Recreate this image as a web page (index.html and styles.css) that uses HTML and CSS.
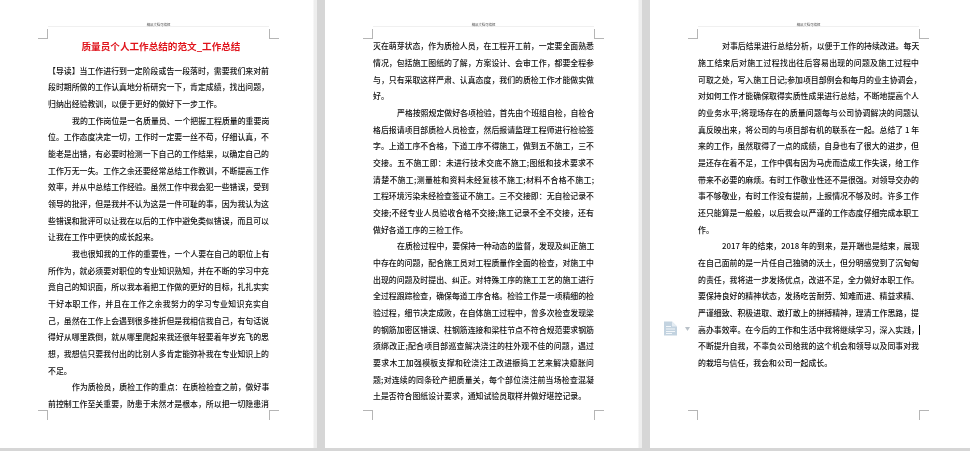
FILE: index.html
```html
<!DOCTYPE html>
<html lang="zh-CN">
<head>
<meta charset="utf-8">
<title>质量员个人工作总结的范文</title>
<link rel="stylesheet" href="styles.css">
</head>
<body>
<main class="desk">
  <section class="page page-a">
    <div class="running-head"><span>精品文档可编辑</span></div>
    <i class="mark tl"></i><i class="mark tr"></i><i class="mark bl"></i><i class="mark br"></i>
    <h1 class="title">质量员个人工作总结的范文_工作总结</h1>
    <p class="para flush">
      <span class="line">【导读】当工作进行到一定阶段或告一段落时，需要我们来对前</span>
      <span class="line">段时期所做的工作认真地分析研究一下，肯定成绩，找出问题，</span>
      <span class="line end">归纳出经验教训，以便于更好的做好下一步工作。</span>
    </p>
    <p class="para">
      <span class="line">我的工作岗位是一名质量员、一个把握工程质量的重要岗</span>
      <span class="line">位。工作态度决定一切，工作时一定要一丝不苟，仔细认真，不</span>
      <span class="line">能老是出错，有必要时检测一下自己的工作结果，以确定自己的</span>
      <span class="line">工作万无一失。工作之余还要经常总结工作教训，不断提高工作</span>
      <span class="line">效率，并从中总结工作经验。虽然工作中我会犯一些错误，受到</span>
      <span class="line">领导的批评，但是我并不认为这是一件可耻的事，因为我认为这</span>
      <span class="line">些错误和批评可以让我在以后的工作中避免类似错误，而且可以</span>
      <span class="line end">让我在工作中更快的成长起来。</span>
    </p>
    <p class="para">
      <span class="line">我也很知我的工作的重要性，一个人要在自己的职位上有</span>
      <span class="line">所作为，就必须要对职位的专业知识熟知，并在不断的学习中充</span>
      <span class="line">竟自己的知识面，所以我本着把工作做的更好的目标，扎扎实实</span>
      <span class="line">干好本职工作，并且在工作之余我努力的学习专业知识充实自</span>
      <span class="line">己，虽然在工作上会遇到很多挫折但是我相信我自己，有句话说</span>
      <span class="line">得好从哪里跌倒，就从哪里爬起来我还很年轻要着年岁充飞的思</span>
      <span class="line">想，我想信只要我付出的比别人多肯定能弥补我在专业知识上的</span>
      <span class="line end">不足。</span>
    </p>
    <p class="para">
      <span class="line">作为质检员，质检工作的重点：在质检检查之前，做好事</span>
      <span class="line">前控制工作至关重要，防患于未然才是根本，所以把一切隐患消</span>
    </p>
  </section>

  <section class="page page-b">
    <div class="running-head"><span>精品文档可编辑</span></div>
    <i class="mark tl"></i><i class="mark tr"></i><i class="mark bl"></i><i class="mark br"></i>
    <p class="para flush">
      <span class="line">灭在萌芽状态，作为质检人员，在工程开工前，一定要全面熟悉</span>
      <span class="line">情况，包括施工图纸的了解，方案设计、会审工作，都要全程参</span>
      <span class="line">与，只有采取这样严肃、认真态度，我们的质检工作才能做实做</span>
      <span class="line end">好。</span>
    </p>
    <p class="para">
      <span class="line">严格按照规定做好各项检验，首先由个班组自检，自检合</span>
      <span class="line">格后报请项目部质检人员检查，然后报请监理工程师进行检验签</span>
      <span class="line">字。上道工序不合格，下道工序不得施工，做到五不施工，三不</span>
      <span class="line">交接。五不施工即：未进行技术交底不施工;图纸和技术要求不</span>
      <span class="line">清楚不施工;测量桩和资料未经复核不施工;材料不合格不施工;</span>
      <span class="line">工程环境污染未经检查签证不施工。三不交接即：无自检记录不</span>
      <span class="line">交接;不经专业人员验收合格不交接;施工记录不全不交接，还有</span>
      <span class="line end">做好各道工序的三检工作。</span>
    </p>
    <p class="para">
      <span class="line">在质检过程中，要保持一种动态的监督，发现及纠正施工</span>
      <span class="line">中存在的问题，配合施工员对工程质量作全面的检查，对施工中</span>
      <span class="line">出现的问题及时提出、纠正。对特殊工序的施工工艺的施工进行</span>
      <span class="line">全过程跟踪检查，确保每道工序合格。检验工作是一项精细的检</span>
      <span class="line">验过程，细节决定成败，在自体施工过程中，曾多次检查发现梁</span>
      <span class="line">的钢筋加密区错误、柱钢筋连接和梁柱节点不符合规范要求钢筋</span>
      <span class="line">须绑改正;配合项目部巡查解决浇注的柱外观不佳的问题，遇过</span>
      <span class="line">要求木工加强模板支撑和砼浇注工改进振捣工艺来解决瘪胀问</span>
      <span class="line">题;对连续的同条砼产把质量关，每个部位浇注前当场检查混凝</span>
      <span class="line end">土是否符合图纸设计要求，通知试验员取样并做好堪控记录。</span>
    </p>
  </section>

  <section class="page page-c">
    <div class="running-head"><span>精品文档可编辑</span></div>
    <i class="mark tl"></i><i class="mark tr"></i><i class="mark bl"></i><i class="mark br"></i>
    <svg class="doc-icon" viewBox="0 0 13 14" aria-hidden="true">
      <path d="M0 0h8l5 5v9H0z" fill="#c3d3e0"/>
      <path d="M8 0v5h5z" fill="#e6edf3"/>
      <path d="M2 5h5M2 7.5h9M2 10h9M2 12h6" stroke="#f2f6f9" stroke-width="1"/>
    </svg>
    <svg class="doc-arrow" viewBox="0 0 5 4" aria-hidden="true"><path d="M0 0h5L2.5 4z" fill="#b9c1c8"/></svg>
    <p class="para">
      <span class="line">对事后结果进行总结分析，以便于工作的持续改进。每天</span>
      <span class="line">施工结束后对施工过程找出往后容易出现的问题及施工过程中</span>
      <span class="line">可取之处，写入施工日记;参加项目部例会和每月的业主协调会，</span>
      <span class="line">对如何工作才能确保取得实质性成果进行总结，不断地提高个人</span>
      <span class="line">的业务水平;将现场存在的质量问题每与公司协调解决的问题认</span>
      <span class="line">真反映出来，将公司的与项目部有机的联系在一起。总结了 1 年</span>
      <span class="line">来的工作，虽然取得了一点的成绩，自身也有了很大的进步，但</span>
      <span class="line">是还存在着不足，工作中偶有因为马虎而造成工作失误，给工作</span>
      <span class="line">带来不必要的麻烦。有时工作敬业性还不是很强。对领导交办的</span>
      <span class="line">事不够敬业，有时工作没有提前，上报情况不够及时。许多工作</span>
      <span class="line">还只能算是一般般，以后我会以严谨的工作态度仔细完成本职工</span>
      <span class="line end">作。</span>
    </p>
    <p class="para">
      <span class="line">2017 年的结束，2018 年的到来，是开端也是结束，展现</span>
      <span class="line">在自己面前的是一片任自己独骑的沃土，但分明感觉到了沉甸甸</span>
      <span class="line">的责任，我将进一步发扬优点，改进不足，全力做好本职工作。</span>
      <span class="line">要保持良好的精神状态，发扬吃苦耐劳、知难而进、精益求精、</span>
      <span class="line">严谨细致、积极进取、敢打敢上的拼搏精神，理清工作思路，提</span>
      <span class="line has-caret">高办事效率。在今后的工作和生活中我将继续学习，深入实践，<i class="caret"></i></span>
      <span class="line">不断提升自我，不辜负公司给我的这个机会和领导以及同事对我</span>
      <span class="line end">的栽培与信任，我会和公司一起成长。</span>
    </p>
  </section>
</main>
</body>
</html>
```

FILE: styles.css
```css
* { box-sizing: border-box; }

html, body { margin: 0; padding: 0; }

body {
  width: 970px;
  height: 451px;
  overflow: hidden;
  background: #d6d6d6;
  font-family: "Noto Sans CJK SC", "Noto Sans", sans-serif;
  color: #111;
}

.desk {
  display: flex;
  gap: 8px;
  height: 448px;
}

.page {
  position: relative;
  flex: none;
  height: 448px;
  padding: 38.4px 48px 0;
  background: #fff;
  overflow: hidden;
  filter: blur(0.4px);
}

.page-a, .page-b {
  width: 317px;
  background: linear-gradient(to right, #fff 313px, #eeeeee 314px);
}

.page-c { width: 320px; }

.title {
  margin: 0 0 7.3px;
  padding-left: 5px;
  height: 17px;
  line-height: 17px;
  font-size: 9.6px;
  font-weight: 700;
  color: #e0141c;
  text-align: center;
  white-space: nowrap;
}

.para { margin: 0; }

.line {
  display: block;
  width: 221px;
  height: 16.67px;
  line-height: 16.67px;
  font-size: 7.9px;
  font-weight: 500;
  white-space: nowrap;
  text-align: justify;
  text-align-last: justify;
}

.para:not(.flush) > .line:first-child { padding-left: 24px; }

.line.end {
  text-align-last: left;
}

.has-caret { position: relative; }

.caret {
  position: absolute;
  right: -1px;
  top: 3px;
  width: 1.5px;
  height: 10px;
  background: #000;
}

.running-head {
  position: absolute;
  left: 48px;
  top: 22px;
  width: 221px;
  height: 5px;
  border-bottom: 1px solid #f0f0f0;
  text-align: center;
  font-size: 3.4px;
  line-height: 5px;
  color: #555;
}

.mark {
  position: absolute;
  width: 10px;
  height: 10px;
  border: 0 solid #b5b5b5;
}

.tl { left: 38px; top: 29px; border-right-width: 1px; border-bottom-width: 1px; }
.tr { left: 269px; top: 29px; border-left-width: 1px; border-bottom-width: 1px; }
.bl { left: 38px; top: 410px; border-right-width: 1px; border-top-width: 1px; }
.br { left: 269px; top: 410px; border-left-width: 1px; border-top-width: 1px; }

.doc-icon {
  position: absolute;
  left: 14px;
  top: 321px;
  width: 13px;
  height: 15px;
}

.doc-arrow {
  position: absolute;
  left: 35px;
  top: 327px;
  width: 5px;
  height: 4px;
}
```
